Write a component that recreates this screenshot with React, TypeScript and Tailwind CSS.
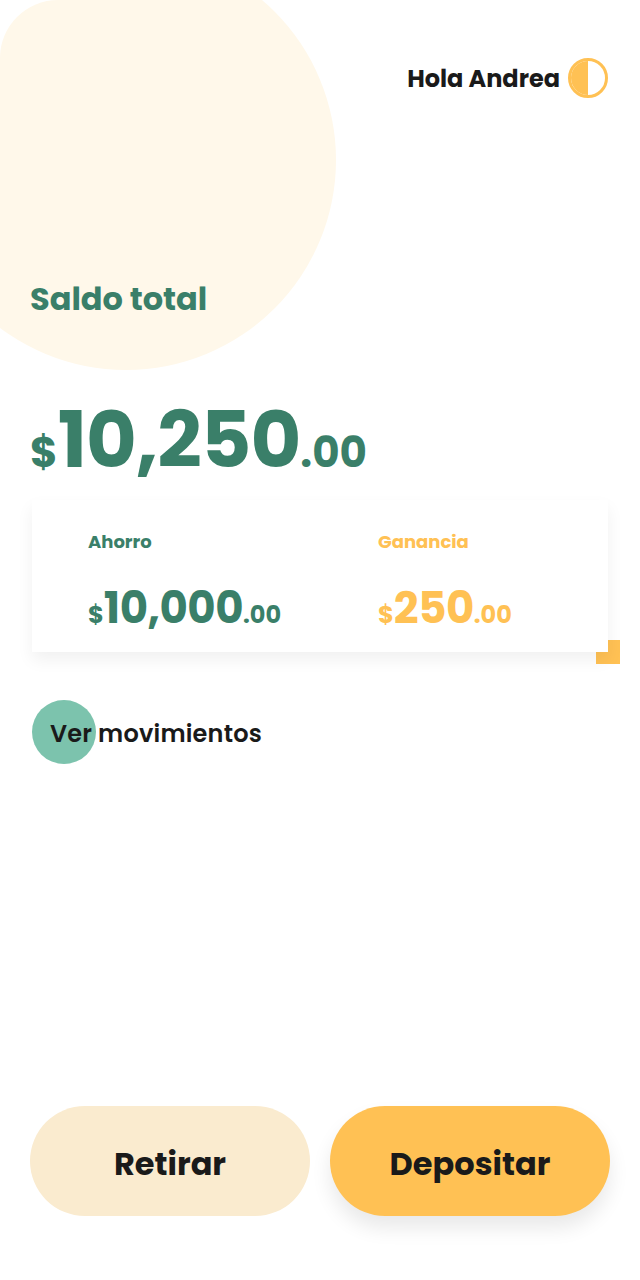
const font = "font-['Poppins','Inter','Liberation_Sans',sans-serif]";

const Amount = ({ value, color }: { value: string; color: string }) => (
    <p className={`flex items-baseline font-bold ${color}`}>
        <span className="text-[24px] leading-none">$</span>
        <span className="text-[43.5px] leading-none tracking-[-0.5px]">{value}</span>
        <span className="text-[24px] leading-none">.00</span>
    </p>
);

export default function App() {
    return (
        <div className={`relative h-[1280px] w-[640px] overflow-hidden bg-white ${font}`}>
            {/* blob: circle clipped by a box with a rounded top left corner */}
            <div className="absolute left-0 top-0 h-[380px] w-[340px] overflow-hidden rounded-tl-[58px]">
                <div className="absolute left-[-84px] top-[-50px] h-[420px] w-[420px] rounded-full bg-[#fff8ea]" />
            </div>

            <div className="relative flex h-full flex-col">
                <header className="flex items-center justify-end gap-2 pr-[32px] pt-[58px]">
                    <span className="pt-[2px] text-[24px] font-bold leading-none text-[#1a1a1a]">Hola Andrea</span>
                    <span className="flex h-10 w-10 overflow-hidden rounded-full border-[3px] border-[#ffc154] bg-white">
                        <span className="h-full w-1/2 bg-[#ffc154]" />
                    </span>
                </header>

                <h2 className="pl-[30px] pt-[182px] text-[32px] font-bold leading-[38px] text-[#3a7f69]">Saldo total</h2>

                <p className="flex items-baseline pl-[30px] pt-[83px] font-bold leading-none text-[#3a7f69]">
                    <span className="text-[42px] leading-none">$</span>
                    <span className="text-[78px] leading-none tracking-[-1px]">10,250</span>
                    <span className="text-[42px] leading-none">.00</span>
                </p>

                <section className="relative ml-[32px] mt-[21px] w-[576px]">
                    <div className="absolute bottom-[-12px] right-[-12px] h-6 w-6 bg-[#ffc154]" />
                    <div className="relative grid h-[152px] grid-cols-[290px_1fr] bg-white pl-[56px] pt-[30px] shadow-[0_8px_16px_rgba(0,0,0,0.06)]">
                        <div>
                            <p className="mb-[32px] text-[18px] font-bold leading-6 text-[#3a7f69]">Ahorro</p>
                            <Amount value="10,000" color="text-[#3a7f69]" />
                        </div>
                        <div>
                            <p className="mb-[32px] text-[18px] font-bold leading-6 text-[#ffc154]">Ganancia</p>
                            <Amount value="250" color="text-[#ffc154]" />
                        </div>
                    </div>
                </section>

                <div className="relative ml-[32px] mt-[48px] flex h-16 items-center">
                    <div className="absolute left-0 top-0 h-16 w-16 rounded-full bg-[#7cc3ad]" />
                    <span className="relative pl-[18px] pt-[3px] text-[24px] font-semibold leading-none tracking-[0.2px] text-[#1a1a1a]">Ver movimientos</span>
                </div>

                <footer className="mt-auto flex gap-5 pb-[64px] pl-[30px] pr-[30px]">
                    <button className="h-[110px] w-[280px] rounded-[55px] bg-[#faebcf] pt-1.5 text-[32px] font-bold text-[#1a1a1a]">Retirar</button>
                    <button className="h-[110px] w-[280px] rounded-[55px] bg-[#ffc154] pt-1.5 text-[32px] font-bold text-[#1a1a1a] shadow-[0_12px_20px_rgba(0,0,0,0.09)]">Depositar</button>
                </footer>
            </div>
        </div>
    );
}
